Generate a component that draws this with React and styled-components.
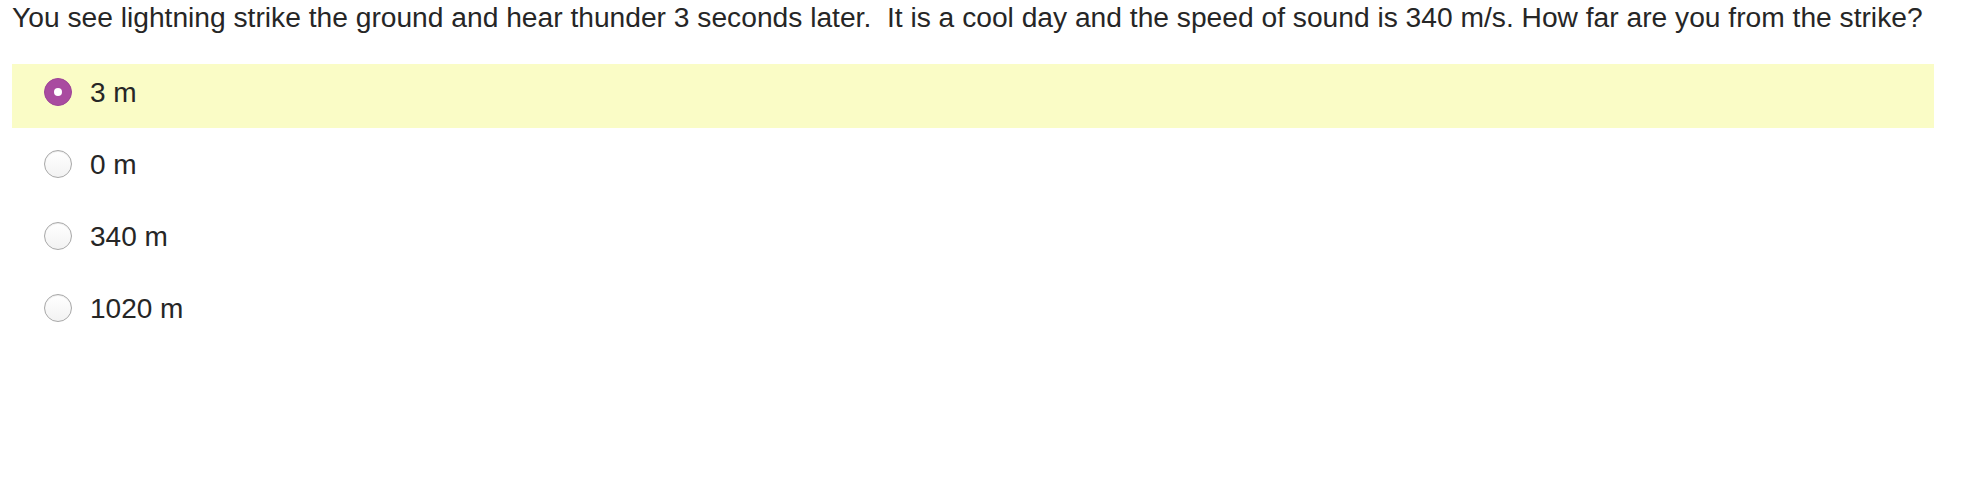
import React, { useState } from 'react'
import styled, { createGlobalStyle } from 'styled-components'

const GlobalStyle = createGlobalStyle`
    html, body {
        margin: 0;
        padding: 0;
        background: #ffffff;
    }
    body {
        font-family: "Liberation Sans", Arial, Helvetica, sans-serif;
        color: #262626;
    }
`

const Page = styled.main`
    padding: 1px 40px 0 12px;
`

const Question = styled.p`
    margin: 0;
    font-size: 28.2px;
    line-height: 32px;
    white-space: nowrap;
`

const Options = styled.div`
    display: flex;
    flex-direction: column;
    gap: 8px;
    margin-top: 31px;
`

const Option = styled.label`
    display: flex;
    align-items: flex-start;
    gap: 18px;
    height: 64px;
    box-sizing: border-box;
    padding: 14px 0 0 32px;
    background: ${p => (p.$selected ? '#fafcc6' : 'transparent')};
    cursor: pointer;
`

const Radio = styled.span`
    flex: none;
    width: 28px;
    height: 28px;
    border-radius: 50%;
    box-sizing: border-box;
    display: flex;
    align-items: center;
    justify-content: center;
    ${p => p.$checked
        ? `
        background: #a94ba0;
        border: 1px solid #9d4496;
        `
        : `
        background: linear-gradient(#ffffff, #f2f2f2);
        border: 1.5px solid #a8a8a8;
        box-shadow: inset 0 1px 1px rgba(0, 0, 0, 0.08);
        `}
`

const Dot = styled.span`
    width: 8px;
    height: 8px;
    border-radius: 50%;
    background: #ffffff;
`

const Label = styled.span`
    font-size: 28px;
    line-height: 28px;
    padding-top: 1px;
`

const answers = ['3 m', '0 m', '340 m', '1020 m']

const App = () => {
    const [picked, setPicked] = useState(0)
    return <>
        <GlobalStyle />
        <Page>
            <Question>
                You see lightning strike the ground and hear thunder 3 seconds later.&nbsp; It is a cool day and the speed of sound is 340 m/s. How far are you from the strike?
            </Question>
            <Options>
                {answers.map((a, i) => (
                    <Option key={a} $selected={picked === i} onClick={() => setPicked(i)}>
                        <Radio $checked={picked === i}>
                            {picked === i && <Dot />}
                        </Radio>
                        <Label>{a}</Label>
                    </Option>
                ))}
            </Options>
        </Page>
    </>
}

export default App
